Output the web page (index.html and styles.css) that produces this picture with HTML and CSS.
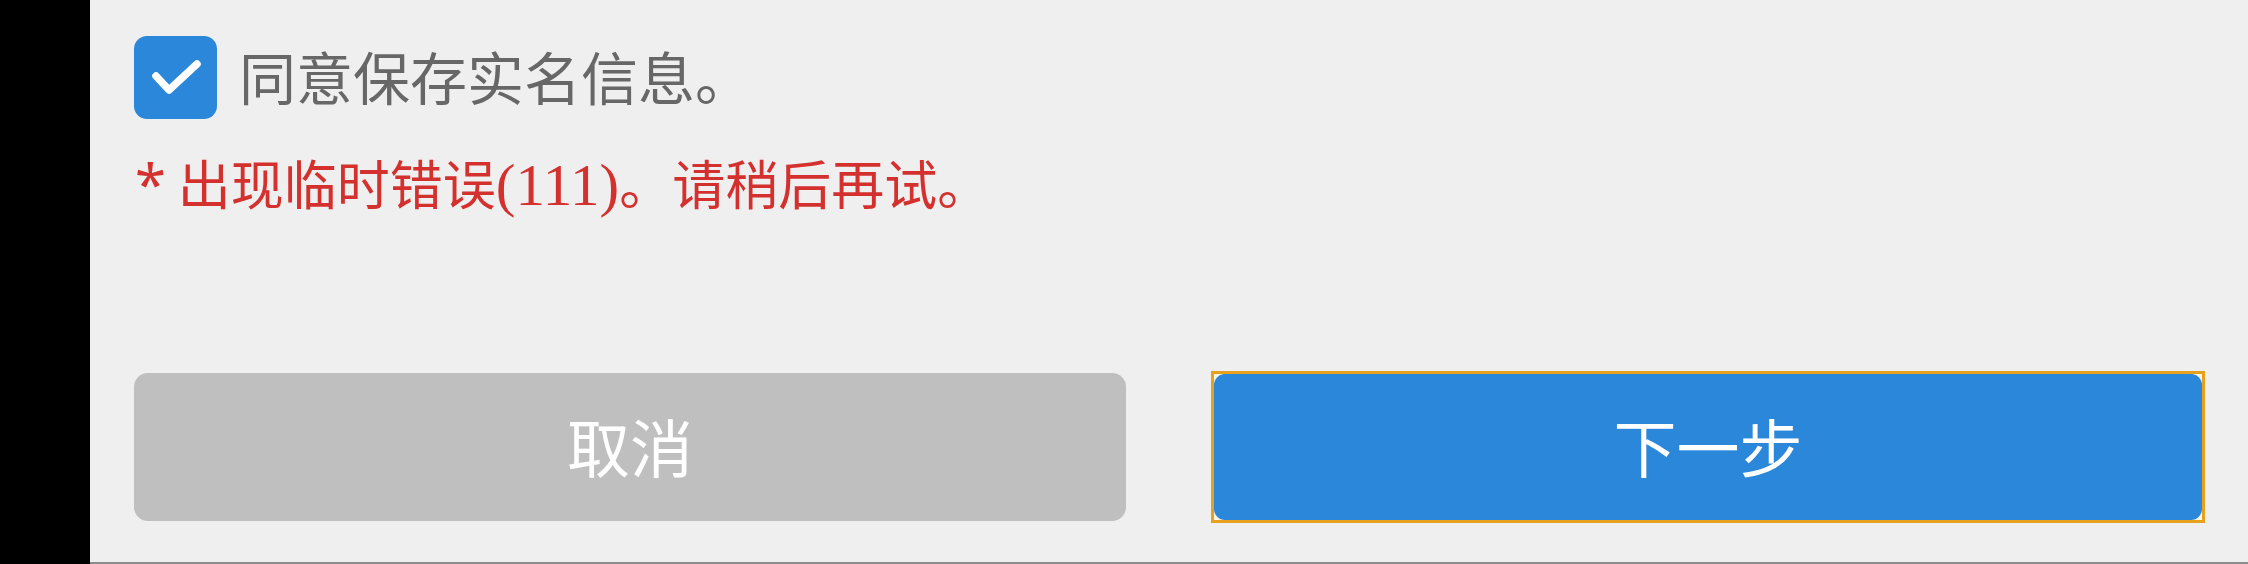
FILE: index.html
```html
<!DOCTYPE html>
<html lang="zh-CN">
<head>
<meta charset="utf-8">
<title>实名信息</title>
<link rel="stylesheet" href="styles.css">
</head>
<body>
<div class="screen">
  <div class="side"></div>
  <main class="panel">
    <label class="agree">
      <span class="box">
        <svg viewBox="0 0 83 83" width="83" height="83" aria-hidden="true">
          <rect x="0" y="0" width="83" height="83" rx="13" fill="#2b87d9"/>
          <polyline points="22,40 35,54 63,28" fill="none" stroke="#ffffff" stroke-width="7.5" stroke-linecap="round" stroke-linejoin="round"/>
        </svg>
      </span>
      <span class="agree-text">同意保存实名信息。</span>
    </label>
    <p class="error"><span class="star">*</span> 出现临时错误<span class="latin">(111)</span>。请稍后再试。</p>
    <div class="actions">
      <button class="btn btn-cancel" type="button">取消</button>
      <span class="focus-ring"><button class="btn btn-next" type="button">下一步</button></span>
    </div>
  </main>
</div>
</body>
</html>
```

FILE: styles.css
```css
html, body {
  margin: 0;
  padding: 0;
  background: #000;
}
.screen {
  display: flex;
  width: 2248px;
  height: 564px;
}
.side {
  width: 90px;
  flex: 0 0 90px;
  background: #000;
}
.panel {
  flex: 1;
  box-sizing: border-box;
  height: 564px;
  background: #efefef;
  border-bottom: 2px solid #8c8c8c;
  padding: 36px 43px 0 44px;
  display: flex;
  flex-direction: column;
  font-family: "Noto Sans CJK SC", "Noto Sans", sans-serif;
}
.agree {
  display: flex;
  align-items: center;
  height: 83px;
}
.box {
  display: block;
  width: 83px;
  height: 83px;
}
.box svg {
  display: block;
}
.agree-text {
  margin-left: 22px;
  font-size: 57px;
  line-height: 83px;
  color: #676767;
  margin-top: -4px;
}
.error {
  margin: 37px 0 0 1px;
  height: 53px;
  font-family: "Noto Sans CJK SC", "Noto Sans", sans-serif;
  font-size: 53px;
  line-height: 53px;
  color: #d3302e;
  white-space: nowrap;
}
.star {
  font-family: "Noto Sans", sans-serif;
  font-size: 56px;
  line-height: 53px;
}
.latin {
  font-family: "Liberation Serif", serif;
  font-size: 59px;
  line-height: 53px;
}
.actions {
  margin-top: 162px;
  display: grid;
  grid-template-columns: 992px 994px;
  column-gap: 85px;
  align-items: center;
}
.btn {
  border: 0;
  margin: 0;
  padding: 0 0 6px 0;
  box-sizing: border-box;
  font-family: "Noto Sans CJK SC", "Noto Sans", sans-serif;
  font-size: 63px;
  color: #ffffff;
  display: flex;
  align-items: center;
  justify-content: center;
  border-radius: 14px;
}
.btn-cancel {
  width: 992px;
  height: 148px;
  background: #bfbfbf;
}
.focus-ring {
  display: block;
  box-sizing: border-box;
  height: 152px;
  border: 3px solid #e8a11c;
  background: #fdf5e4;
}
.btn-next {
  width: 100%;
  height: 146px;
  background: #2b87d9;
  border-radius: 11px;
}
```
